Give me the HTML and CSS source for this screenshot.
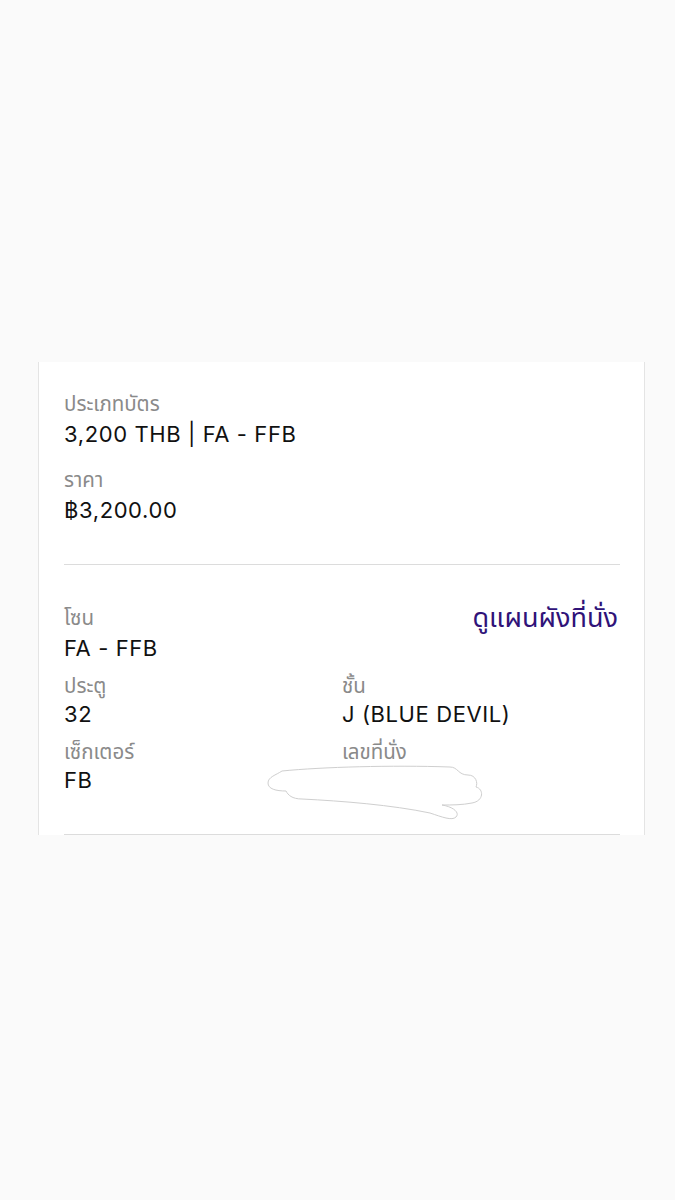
FILE: index.html
```html
<!DOCTYPE html>
<html lang="th">
<head>
  <meta charset="UTF-8" />
  <meta name="viewport" content="width=device-width, initial-scale=1.0"/>
  <title>Ticket</title>
  <link rel="stylesheet" href="styles.css">
</head>
<body>

  <div class="top-space"></div>

  <div class="card">
    <div class="section">
      <div class="label">ประเภทบัตร</div>
      <div class="value">3,200 THB | FA - FFB</div>
      <div class="label next">ราคา</div>
      <div class="value">฿3,200.00</div>
    </div>

    <div class="section">
      <div class="zone-row">
        <div class="label">โซน</div>
        <a class="map-link" href="#">ดูแผนผังที่นั่ง</a>
      </div>
      <div class="value">FA - FFB</div>

      <div class="grid">
        <div>
          <div class="label">ประตู</div>
          <div class="value">32</div>
        </div>
        <div>
          <div class="label">ชั้น</div>
          <div class="value">J (BLUE DEVIL)</div>
        </div>
        <div>
          <div class="label">เซ็กเตอร์</div>
          <div class="value">FB</div>
        </div>
        <div class="seat">
          <div class="label">เลขที่นั่ง</div>
          <div class="value">&nbsp;</div>
          <!-- hand drawn cover over the seat number -->
          <svg class="scribble" width="230" height="64" viewBox="0 0 230 64">
            <path d="M20 10 C60 6 130 4 188 6 C196 6 196 14 206 14 C214 14 216 22 214 26 C222 28 222 40 210 42 C200 44 190 44 180 44 C192 46 198 52 194 56 C190 60 180 56 168 52 C130 44 80 40 40 38 C30 38 26 34 24 30 C14 30 6 28 6 22 C6 16 14 14 20 10 Z" fill="#fff" stroke="#cfcfcf" stroke-width="1"/>
          </svg>
        </div>
      </div>
    </div>
  </div>

</body>
</html>
```

FILE: styles.css
```css
body {
  margin: 0;
  background: #fafafa;
  font-family: Inter, "Noto Sans Thai", "Noto Sans", sans-serif;
}
.top-space {
  height: 362px;
}
.card {
  margin: 0 30px 0 38px;
  background: #fff;
  border-left: 1px solid #e4e4e4;
  border-right: 1px solid #e4e4e4;
  padding: 0 24px 0 25px;
}
.section {
  padding: 30px 0 39px;
  border-bottom: 1px solid #dcdcdc;
}
.section + .section {
  padding-top: 41px;
}
.label {
  font-size: 20.5px;
  line-height: 24px;
  color: #8a8a8a;
}
.label.next {
  margin-top: 19px;
}
.value {
  font-size: 22px;
  line-height: 30px;
  letter-spacing: 0.6px;
  color: #111;
  margin-top: 3px;
}
.zone-row {
  display: flex;
  justify-content: space-between;
  align-items: center;
}
.map-link {
  font-size: 27px;
  line-height: 24px;
  color: #301379;
  text-decoration: none;
  margin-right: 2px;
}
.grid {
  display: grid;
  grid-template-columns: 1fr 1fr;
  row-gap: 11px;
  margin-top: 11px;
}
.grid .value {
  margin-top: 1px;
}
.seat {
  position: relative;
}
.scribble {
  position: absolute;
  left: -80px;
  top: 18px;
  height: 70px;
}
```
